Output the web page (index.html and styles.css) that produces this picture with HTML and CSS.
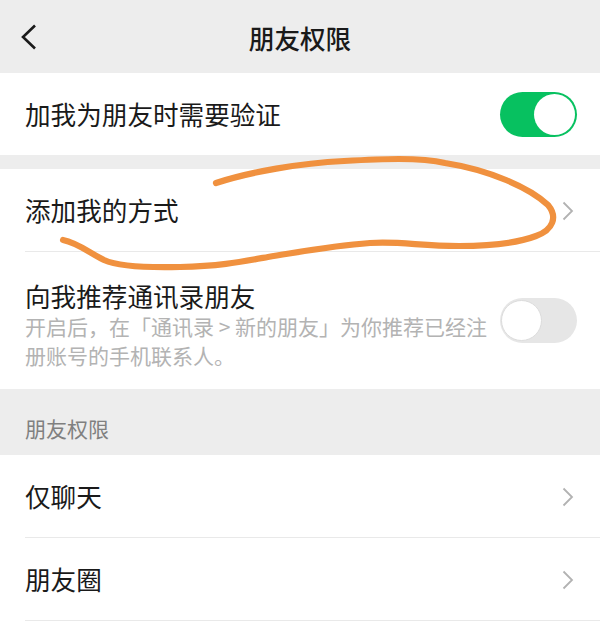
FILE: index.html
```html
<!DOCTYPE html>
<html lang="zh-CN">
<head>
<meta charset="utf-8">
<title>朋友权限</title>
<link rel="stylesheet" href="styles.css">
</head>
<body>
<div class="page">
  <header class="nav">
    <div class="nav-back">
      <svg width="16" height="26" viewBox="0 0 16 26"><path d="M14 1.5 L2 13 L14 24.5" fill="none" stroke="#1a1a1a" stroke-width="2.6" stroke-linejoin="miter"/></svg>
    </div>
    <h1 class="nav-title">朋友权限</h1>
    <div class="nav-side"></div>
  </header>

  <section class="group">
    <div class="cell">
      <span class="cell-title">加我为朋友时需要验证</span>
      <span class="switch on"><span class="knob"></span></span>
    </div>
  </section>

  <section class="group gap">
    <div class="cell">
      <span class="cell-title">添加我的方式</span>
      <svg class="arrow" width="12" height="20" viewBox="0 0 12 20"><path d="M1.5 1.5 L10 10 L1.5 18.5" fill="none" stroke="#b2b2b2" stroke-width="1.8"/></svg>
    </div>
    <div class="cell tall">
      <div class="cell-body">
        <div class="cell-title">向我推荐通讯录朋友</div>
        <div class="cell-desc">开启后，在「通讯录 &gt; 新的朋友」为你推荐已经注册账号的手机联系人。</div>
      </div>
      <span class="switch off"><span class="knob"></span></span>
    </div>
  </section>

  <div class="section-label">朋友权限</div>

  <section class="group">
    <div class="cell">
      <span class="cell-title">仅聊天</span>
      <svg class="arrow" width="12" height="20" viewBox="0 0 12 20"><path d="M1.5 1.5 L10 10 L1.5 18.5" fill="none" stroke="#b2b2b2" stroke-width="1.8"/></svg>
    </div>
    <div class="cell">
      <span class="cell-title">朋友圈</span>
      <svg class="arrow" width="12" height="20" viewBox="0 0 12 20"><path d="M1.5 1.5 L10 10 L1.5 18.5" fill="none" stroke="#b2b2b2" stroke-width="1.8"/></svg>
    </div>
    <div class="cell"></div>
  </section>

  <svg class="scribble" width="600" height="637" viewBox="0 0 600 637">
    <path d="M216 183 C250 172 300 163 344 161 C380 159 420 157 445 163 C490 170 530 188 548 205 C558 217 553 230 536 236 C515 244 490 246 459 246 C420 246 400 241 370 243 C330 246 300 252 268 257 C240 262 220 266 180 267 C140 268 115 265 104 260 C88 252 78 243 63 240" fill="none" stroke="#f0913f" stroke-width="6.2" stroke-linecap="round" stroke-linejoin="round"/>
  </svg>
</div>
</body>
</html>
```

FILE: styles.css
```css
* { box-sizing: border-box; }
html, body {
  margin: 0;
  padding: 0;
}
body {
  background: #ededed;
  font-family: "Noto Sans CJK SC", "Noto Sans", sans-serif;
  color: #1a1a1a;
}
.page {
  position: relative;
  width: 600px;
  height: 637px;
  overflow: hidden;
  background: #ededed;
}
.nav {
  height: 73px;
  display: grid;
  grid-template-columns: 80px 1fr 80px;
  align-items: center;
}
.nav-back {
  padding-left: 21px;
  display: flex;
  align-items: center;
  padding-top: 1px;
}
.nav-title {
  margin: 0;
  text-align: center;
  font-size: 25.6px;
  font-weight: 500;
  line-height: 36px;
  padding-top: 2px;
  color: #1a1a1a;
}
.group {
  background: #fff;
}
.group.gap {
  margin-top: 14px;
}
.cell {
  margin-left: 25px;
  padding-right: 23px;
  height: 83px;
  display: flex;
  align-items: center;
  justify-content: space-between;
  border-bottom: 1px solid #e9e9e9;
}
.group > .cell:last-child {
  border-bottom: none;
}
.group:first-of-type .cell { height: 82px; }
.cell.tall {
  height: 137px;
  padding-top: 9px;
  align-items: center;
}
.cell-title {
  font-size: 25.6px;
  line-height: 36px;
  color: #1a1a1a;
}
.cell-body {
  width: 467px;
  display: flex;
  flex-direction: column;
}
.cell.tall .cell-title {
  line-height: 32px;
}
.cell-desc {
  font-size: 21px;
  line-height: 29px;
  color: #b3b3b3;
}
.arrow {
  margin-right: 3px;
  margin-top: 2px;
}
.switch {
  position: relative;
  flex: none;
  width: 77px;
  height: 45px;
  border-radius: 23px;
}
.switch.on { background: #07c160; }
.switch.off { background: #e6e6e6; margin-top: -9px; }
.knob {
  position: absolute;
  top: 2px;
  width: 41px;
  height: 41px;
  border-radius: 50%;
  background: #fff;
}
.switch.on .knob { right: 2px; }
.switch.off .knob { left: 1px; border: 1px solid #dcdcdc; }
.section-label {
  height: 66px;
  padding: 24px 0 0 25px;
  font-size: 21px;
  line-height: 30px;
  color: #808080;
}
.scribble {
  position: absolute;
  left: 0;
  top: 0;
  pointer-events: none;
}
```
